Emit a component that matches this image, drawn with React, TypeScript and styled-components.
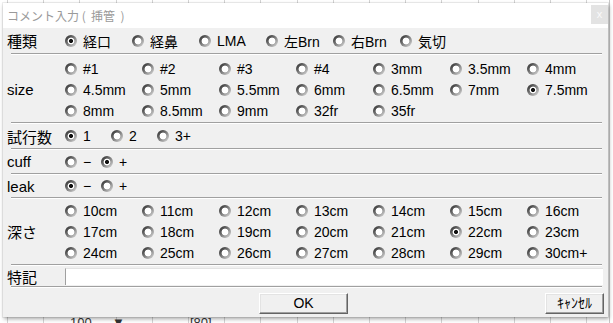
import * as React from 'react'
import styled, { createGlobalStyle } from 'styled-components'

const GlobalStyle = createGlobalStyle`
  html, body {
    margin: 0;
    padding: 0;
  }
  body {
    width: 613px;
    height: 323px;
    overflow: hidden;
    background-color: #fff;
    background-image: repeating-linear-gradient(90deg, #d4d4d4 0 1px, transparent 1px 36.2px);
    background-position: 7px 0;
    font-family: "Liberation Sans", "Noto Sans CJK JP", sans-serif;
  }
`

const Page = styled.div`
  position: relative;
  width: 613px;
  height: 323px;
  overflow: hidden;
`

const EdgeLine = styled.div`
  position: absolute;
  top: 0;
  right: 3px;
  width: 1px;
  height: 323px;
  background: #c8c8c8;
`

const BehindText = styled.span<{ $left: number }>`
  position: absolute;
  left: ${p => p.$left}px;
  top: 315px;
  font-size: 13px;
  line-height: 15px;
  color: #333;
`

const Dialog = styled.div`
  position: absolute;
  left: 3px;
  top: 3px;
  width: 605px;
  height: 314px;
  background: #f0f0f0;
  box-shadow: 0 0 0 1px rgba(0, 0, 0, 0.06), 1px 2px 4px rgba(0, 0, 0, 0.35);
  display: flex;
  flex-direction: column;
  z-index: 1;
`

const TitleBar = styled.div`
  height: 25px;
  flex: none;
  background: #fff;
  display: flex;
  align-items: flex-start;
  justify-content: space-between;
`

const Title = styled.span`
  margin: 5px 0 0 4px;
  font-family: "Noto Sans CJK JP", sans-serif;
  font-size: 12px;
  line-height: 16px;
  color: #9a9a9a;
  white-space: pre;
`

const CloseButton = styled.div`
  margin-top: 2px;
  width: 17px;
  height: 19px;
  background: #e3e3e3;
  color: #fafafa;
  font-size: 11px;
  line-height: 18px;
  text-align: center;
`

const Row = styled.div<{ $h: number; $pt?: number }>`
  height: ${p => p.$h}px;
  flex: none;
  padding: ${p => p.$pt ?? 0}px 5px 0 4px;
  box-sizing: border-box;
  display: flex;
  align-items: center;
`

const Label = styled.div`
  width: 58px;
  flex: none;
  font-size: 15px;
  color: #000;
  white-space: nowrap;
`

const Options = styled.div<{ $col: number; $cols: number }>`
  display: grid;
  grid-template-columns: repeat(${p => p.$cols}, ${p => p.$col}px);
  grid-auto-rows: 21px;
  flex: none;
`

const Option = styled.label`
  display: flex;
  align-items: center;
  gap: 6px;
  font-size: 14px;
  color: #000;
  white-space: nowrap;
`

const Radio = styled.span<{ $on?: boolean }>`
  width: 12px;
  height: 12px;
  flex: none;
  border-radius: 50%;
  background:
    ${p =>
      p.$on
        ? 'radial-gradient(circle, #111 0 1.8px, #fff 2.3px 3.1px, transparent 3.7px)'
        : 'radial-gradient(circle, #fff 0 3.1px, transparent 3.7px)'},
    linear-gradient(135deg, #333 10%, #808080 50%, #d8d8d8 95%);
`

const Divider = styled.div`
  height: 0;
  flex: none;
  margin: 0 6px 0 8px;
  border-top: 1px solid #a0a0a0;
  border-bottom: 1px solid #fff;
`

const NoteInput = styled.div`
  flex: 1;
  height: 16px;
  background: #fff;
  border-left: 1px solid #a0a0a0;
  border-top: 1px solid #e3e3e3;
`

const ButtonBar = styled.div`
  display: grid;
  grid-template-columns: 1fr auto 1fr;
  padding: 5px 4px 0 0;
`

const Button = styled.div<{ $w: number; $end?: boolean }>`
  grid-column: ${p => (p.$end ? 3 : 2)};
  justify-self: ${p => (p.$end ? 'end' : 'center')};
  width: ${p => p.$w}px;
  height: 21px;
  box-sizing: border-box;
  background: #f0f0f0;
  border: 1px solid;
  border-color: #fff #646464 #646464 #fff;
  box-shadow: inset -1px -1px 0 #a0a0a0, inset 1px 1px 0 #e3e3e3;
  font-size: 14px;
  line-height: 19px;
  text-align: center;
  color: #000;
`

type Item = { text: string; on?: boolean }

const mk = (list: string[], on: string): Item[] => list.map(text => ({ text, on: text === on }))

const kinds = mk(['経口', '経鼻', 'LMA', '左Brn', '右Brn', '気切'], '経口')
const sizes = mk(
  ['#1', '#2', '#3', '#4', '3mm', '3.5mm', '4mm', '4.5mm', '5mm', '5.5mm', '6mm', '6.5mm', '7mm', '7.5mm',
    '8mm', '8.5mm', '9mm', '32fr', '35fr'],
  '7.5mm'
)
const trials = mk(['1', '2', '3+'], '1')
const cuff = mk(['−', '+'], '+')
const leak = mk(['−', '+'], '−')
const depths = mk(
  Array.from({ length: 21 }, (_, i) => (i === 20 ? '30cm+' : `${10 + i}cm`)),
  '22cm'
)

const RadioGroup = ({ items, col, cols }: { items: Item[]; col: number; cols: number }) => (
  <Options $col={col} $cols={cols}>
    {items.map(it => (
      <Option key={it.text}>
        <Radio $on={it.on} />
        {it.text}
      </Option>
    ))}
  </Options>
)

const App = () => {
  return (
    <Page>
      <GlobalStyle />
      <EdgeLine />
      <BehindText $left={70}>100</BehindText>
      <BehindText $left={112}>▼</BehindText>
      <BehindText $left={190}>[80]</BehindText>
      <Dialog>
        <TitleBar>
          <Title>コメント入力 (  挿管  )</Title>
          <CloseButton>x</CloseButton>
        </TitleBar>
        <Row $h={25}>
          <Label>種類</Label>
          <RadioGroup items={kinds} col={67} cols={6} />
        </Row>
        <Divider />
        <Row $h={67} $pt={2}>
          <Label>size</Label>
          <RadioGroup items={sizes} col={77} cols={7} />
        </Row>
        <Divider />
        <Row $h={24}>
          <Label>試行数</Label>
          <RadioGroup items={trials} col={46} cols={3} />
        </Row>
        <Divider />
        <Row $h={23}>
          <Label>cuff</Label>
          <RadioGroup items={cuff} col={36} cols={2} />
        </Row>
        <Divider />
        <Row $h={22}>
          <Label>leak</Label>
          <RadioGroup items={leak} col={36} cols={2} />
        </Row>
        <Divider />
        <Row $h={65}>
          <Label>深さ</Label>
          <RadioGroup items={depths} col={77} cols={7} />
        </Row>
        <Divider />
        <Row $h={20}>
          <Label>特記</Label>
          <NoteInput />
        </Row>
        <Divider />
        <ButtonBar>
          <Button $w={89}>OK</Button>
          <Button $w={59} $end>ｷｬﾝｾﾙ</Button>
        </ButtonBar>
      </Dialog>
    </Page>
  )
}

export default App
